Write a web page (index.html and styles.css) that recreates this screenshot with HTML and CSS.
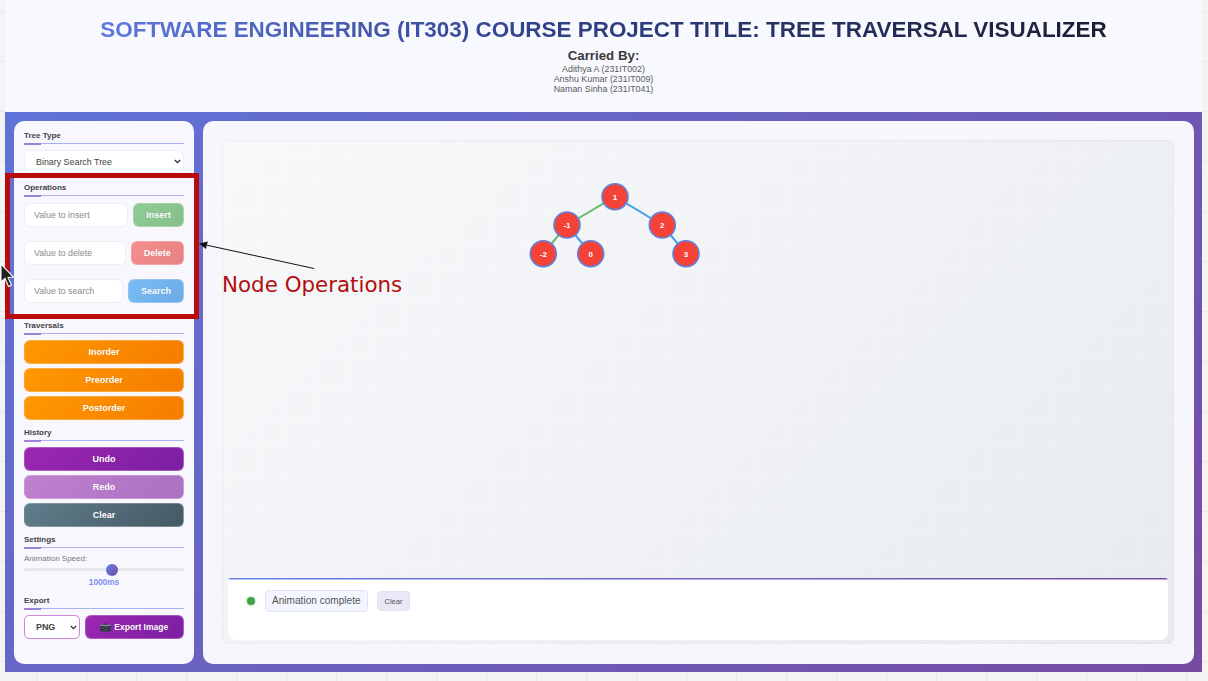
FILE: index.html
```html
<!DOCTYPE html>
<html lang="en">
<head>
<meta charset="utf-8">
<title>Tree Traversal Visualizer</title>
<link rel="stylesheet" href="styles.css">
</head>
<body>
<div class="app">
  <header class="header">
    <h1 class="title">SOFTWARE ENGINEERING (IT303) COURSE PROJECT TITLE: TREE TRAVERSAL VISUALIZER</h1>
    <h2 class="carried">Carried By:</h2>
    <p class="name">Adithya A (231IT002)</p>
    <p class="name">Anshu Kumar (231IT009)</p>
    <p class="name">Naman Sinha (231IT041)</p>
  </header>
  <div class="workspace">
    <aside class="sidebar">
      <section class="section section-type">
        <h3 class="section-title">Tree Type</h3>
        <select class="tree-select"><option>Binary Search Tree</option></select>
      </section>
      <section class="section section-ops">
        <h3 class="section-title">Operations</h3>
        <div class="op-row"><input class="op-input op-input-insert" placeholder="Value to insert"><button class="btn btn-insert">Insert</button></div>
        <div class="op-row"><input class="op-input op-input-delete" placeholder="Value to delete"><button class="btn btn-delete">Delete</button></div>
        <div class="op-row"><input class="op-input op-input-search" placeholder="Value to search"><button class="btn btn-search">Search</button></div>
      </section>
      <section class="section">
        <h3 class="section-title">Traversals</h3>
        <div class="stack">
          <button class="btn btn-orange">Inorder</button>
          <button class="btn btn-orange">Preorder</button>
          <button class="btn btn-orange">Postorder</button>
        </div>
      </section>
      <section class="section">
        <h3 class="section-title">History</h3>
        <div class="stack">
          <button class="btn btn-purple">Undo</button>
          <button class="btn btn-redo">Redo</button>
          <button class="btn btn-slate">Clear</button>
        </div>
      </section>
      <section class="section">
        <h3 class="section-title">Settings</h3>
        <label class="speed-label">Animation Speed:</label>
        <input class="speed" type="range" min="0" max="1800" value="1000">
        <div class="speed-value">1000ms</div>
      </section>
      <section class="section">
        <h3 class="section-title">Export</h3>
        <div class="export-row">
          <select class="export-select"><option>PNG</option></select>
          <button class="btn btn-export">
            <svg class="camera" viewBox="0 0 12 10" width="11" height="9"><path fill="#2f3a40" d="M1 2h2.5l.8-1.4h3.4L8.500 2H11a.7.7 0 0 1 .7.7v6a.7.7 0 0 1-.7.7H1a.7.7 0 0 1-.7-.7v-6A.7.7 0 0 1 1 2z"/><rect x=".3" y="2" width="11.400" height="1.200" fill="#8d9aa3"/><circle cx="6" cy="5.800" r="2.300" fill="#5f6f78"/><circle cx="6" cy="5.800" r="1.300" fill="#1c2428"/></svg>
            Export Image
          </button>
        </div>
      </section>
    </aside>
    <main class="main">
      <div class="canvas">
        <svg class="tree" viewBox="0 0 952 504" width="952" height="504">
          <g class="edges">
            <line class="edge-left" x1="393" y1="56.700" x2="345" y2="85"/>
            <line class="edge-right" x1="393" y1="56.700" x2="440.300" y2="85"/>
            <line class="edge-left" x1="345" y1="85" x2="321.300" y2="113.700"/>
            <line class="edge-right" x1="345" y1="85" x2="368.700" y2="113.700"/>
            <line class="edge-right" x1="440.300" y1="85" x2="464" y2="113.700"/>
          </g>
          <g class="node"><circle cx="393" cy="56.700" r="13"/><text x="393" y="59.500">1</text></g>
          <g class="node"><circle cx="345" cy="85" r="13"/><text x="345" y="87.800">-1</text></g>
          <g class="node"><circle cx="440.300" cy="85" r="13"/><text x="440.300" y="87.800">2</text></g>
          <g class="node"><circle cx="321.300" cy="113.700" r="13"/><text x="321.300" y="116.500">-2</text></g>
          <g class="node"><circle cx="368.700" cy="113.700" r="13"/><text x="368.700" y="116.500">0</text></g>
          <g class="node"><circle cx="464" cy="113.700" r="13"/><text x="464" y="116.500">3</text></g>
        </svg>
        <div class="log">
          <span class="log-dot"></span>
          <span class="log-message">Animation complete</span>
          <button class="log-clear">Clear</button>
        </div>
      </div>
    </main>
  </div>
</div>

<div class="callout-box"></div>
<svg class="callout-arrow" viewBox="0 0 130 40" width="130" height="40">
  <line x1="116" y1="30.500" x2="8" y2="7" stroke="#111" stroke-width="1"/>
  <path d="M1 5.500 L10 3.500 L8.500 7.500 L8 11 Z" fill="#111"/>
</svg>
<div class="callout-text">Node Operations</div>
<svg class="pointer" viewBox="0 0 16 26" width="16" height="26">
  <path d="M1 1 L1 19 L5 15.500 L8.500 23.500 L11.500 22 L8 14.500 L13.500 14 Z" fill="#222" stroke="#fff" stroke-width="1.100"/>
</svg>
</body>
</html>
```
FILE: styles.css
```css
* { box-sizing: border-box; }
html, body { margin: 0; height: 100%; }
body {
  position: relative;
  height: 681px;
  overflow: hidden;
  padding: 0 6px 9px 5px;
  font-family: "Liberation Sans", Arial, sans-serif;
  background-color: #f4f4f4;
  background-image:
    linear-gradient(#e8e8e8 1px, transparent 1px),
    linear-gradient(90deg, #e8e8e8 1px, transparent 1px);
  background-size: 50px 50px;
  background-position: 36px 11px;
}
.app { display: flex; flex-direction: column; height: 672px; }

/* Header */
.header {
  height: 112px;
  flex: none;
  padding-top: 17px;
  background: #f8f9ff;
  text-align: center;
}
.title {
  margin: 0 auto;
  width: fit-content;
  font-size: 22.45px;
  line-height: 26px;
  font-weight: 700;
  background: linear-gradient(90deg, #5f78dc 0%, #2f4088 45%, #1a1f33 100%);
  -webkit-background-clip: text;
  background-clip: text;
  color: transparent;
}
.carried {
  margin: 5px 0 1px;
  font-size: 13.3px;
  line-height: 15px;
  font-weight: 700;
  color: #3a3a3a;
}
.name {
  margin: 0;
  font-size: 8.9px;
  line-height: 10px;
  color: #5a5a5a;
}

/* Workspace */
.workspace {
  flex: 1;
  display: flex;
  gap: 9px;
  padding: 9px 8px 8px 9px;
  background: linear-gradient(135deg, #5f73d8 0%, #764ba2 100%);
  min-height: 0;
}
.sidebar {
  flex: none;
  width: 180px;
  padding: 10px 10px 9px;
  border-radius: 10px;
  background: #f7f7fd;
}
.section { margin-bottom: 8px; }
.section-type { margin-bottom: 10px; }
.section-ops { margin-bottom: 18px; }
.section-ops .section-title { margin-bottom: 7px; }
.section-ops .op-row:last-child { margin-bottom: 0; }
.section-title {
  position: relative;
  margin: 0 0 6px;
  height: 13px;
  font-size: 8px;
  line-height: 10px;
  font-weight: 700;
  color: #444;
  border-bottom: 1.500px solid #a8b0f2;
}
.section-title::after {
  content: "";
  position: absolute;
  left: 0;
  bottom: -1.500px;
  width: 17px;
  height: 1.500px;
  background: #9a84d8;
}
.tree-select,
.export-select {
  -webkit-appearance: none;
  appearance: none;
  background-color: #fff;
  background-repeat: no-repeat;
  background-image: url("data:image/svg+xml,%3Csvg xmlns='http://www.w3.org/2000/svg' width='7' height='5'%3E%3Cpath d='M.8 1l2.700 2.700L6.200 1' fill='none' stroke='%23333' stroke-width='1.300'/%3E%3C/svg%3E");
}
.tree-select {
  display: block;
  width: 100%;
  height: 23px;
  padding: 0 11px;
  font: 8.9px "Liberation Sans", Arial, sans-serif;
  color: #444;
  background-position: right 2.500px center;
  border: 1px solid #eef0fa;
  border-radius: 6px;
}
.op-row { display: flex; gap: 5px; margin-bottom: 14px; height: 24px; }
.op-input {
  height: 24px;
  padding: 0 9px;
  font: 8.8px "Liberation Sans", Arial, sans-serif;
  background: #fff;
  border: 1px solid #eceef8;
  border-radius: 6px;
  outline: none;
}
.op-input::placeholder { color: #8a8a8a; }
.op-input-insert { width: 104px; }
.op-input-delete { width: 101.500px; }
.op-input-search { width: 99px; }
.btn {
  display: block;
  height: 24px;
  padding: 0;
  border: 1px solid rgba(255, 255, 255, .25);
  border-radius: 6px;
  color: #fff;
  font: 700 9px "Liberation Sans", Arial, sans-serif;
  text-shadow: 0 0 1px rgba(0, 0, 0, .15);
}
.op-row .btn { flex: 1; min-width: 0; }
.btn-insert { background: linear-gradient(135deg, #8fcb94, #85c08a); }
.btn-delete { background: linear-gradient(135deg, #f58e8c, #e68282); }
.btn-search { background: linear-gradient(135deg, #79bcf4, #6cabe6); }
.stack { display: flex; flex-direction: column; gap: 4px; }
.stack .btn { width: 100%; }
.btn-orange { background: linear-gradient(135deg, #ff9800, #f57c00); }
.btn-purple { background: linear-gradient(135deg, #9c27b0, #7b1fa2); }
.btn-redo { background: linear-gradient(135deg, #c17fcf, #aa72c2); }
.btn-slate { background: linear-gradient(135deg, #607d8b, #455a64); }
.speed-label {
  display: block;
  height: 10px;
  font-size: 8px;
  line-height: 10px;
  color: #7a7a7a;
}
.speed {
  display: block;
  -webkit-appearance: none;
  appearance: none;
  width: 100%;
  height: 3px;
  margin: 4px 0 0;
  padding: 0;
  background: #e6e8ec;
  border-radius: 2px;
}
.speed::-webkit-slider-thumb {
  -webkit-appearance: none;
  appearance: none;
  width: 12px;
  height: 12px;
  border-radius: 50%;
  background: linear-gradient(135deg, #667eea, #764ba2);
  border: none;
}
.speed-value {
  margin-top: 5px;
  height: 12px;
  font-size: 8.3px;
  line-height: 12px;
  font-weight: 700;
  text-align: center;
  color: #7c8ff0;
}
.export-row { display: flex; gap: 4.500px; height: 24px; }
.export-select {
  width: 56px;
  height: 24px;
  padding: 0 11px;
  flex: none;
  font: 700 8.9px "Liberation Sans", Arial, sans-serif;
  color: #444;
  background-position: right 2px center;
  border: 1px solid #cc88d8;
  border-radius: 5px;
}
.btn-export {
  flex: 1;
  display: flex;
  align-items: center;
  justify-content: center;
  gap: 3px;
  font-size: 8.5px;
  background: linear-gradient(135deg, #9c27b0, #7b1fa2);
}
.camera { flex: none; }

/* Main */
.main {
  flex: 1;
  display: flex;
  min-width: 0;
  padding: 19px 20px 20px 19px;
  border-radius: 10px;
  background: #f7f6fd;
}
.canvas {
  position: relative;
  flex: 1;
  display: flex;
  flex-direction: column;
  justify-content: flex-end;
  padding: 0 6px 4px;
  border-radius: 6px;
  background-color: #f2f3f7;
  background-image:
    linear-gradient(rgba(0, 0, 0, .013) 1px, transparent 1px),
    linear-gradient(90deg, rgba(0, 0, 0, .013) 1px, transparent 1px),
    linear-gradient(135deg, #f8f9fb 0%, #e9ecef 100%);
  background-size: 11px 11px, 11px 11px, 100% 100%;
  box-shadow: inset 0 0 4px rgba(0, 0, 0, .05);
}
.tree {
  position: absolute;
  left: 0;
  top: 0;
}
.edges line { stroke-width: 2; }
.edge-left { stroke: #66bb6a; }
.edge-right { stroke: #42a0e6; }
.node circle { fill: #f44336; stroke: #5f82e0; stroke-width: 1.600; }
.node text {
  fill: #fff;
  font: 700 8px "Liberation Sans", Arial, sans-serif;
  text-anchor: middle;
}
.log {
  display: flex;
  align-items: flex-start;
  height: 62px;
  padding: 12px 0 0 19px;
  background: linear-gradient(90deg, #667eea, #764ba2) top / 100% 1.500px no-repeat, #fff;
  border-radius: 3px 3px 8px 8px;
}
.log-dot {
  width: 8px;
  height: 8px;
  margin: 7px 10px 0 0;
  flex: none;
  border-radius: 50%;
  background: #43a047;
  box-shadow: 0 0 3px rgba(76, 175, 80, .6);
}
.log-message {
  height: 22px;
  width: 103px;
  padding: 0 6px;
  margin-right: 9px;
  font-size: 10.1px;
  line-height: 20px;
  white-space: nowrap;
  color: #555;
  background: #f4f6ff;
  border: 1px solid #dfe4fa;
  border-radius: 4px;
}
.log-clear {
  height: 20px;
  width: 33px;
  margin-top: 1px;
  padding: 0;
  font: 7.6px "Liberation Sans", Arial, sans-serif;
  color: #555;
  background: #e8e8f7;
  border: 1px solid #e0e0f2;
  border-radius: 4px;
}

/* Screenshot annotations lying over the page */
.callout-box {
  position: absolute;
  left: 5px;
  top: 173px;
  width: 194px;
  height: 146px;
  border: 5px solid #b80c0c;
}
.callout-arrow {
  position: absolute;
  left: 198px;
  top: 238px;
}
.callout-text {
  position: absolute;
  left: 222px;
  top: 270px;
  font: 21.4px/30px "DejaVu Sans", sans-serif;
  color: #b30d0d;
}
.pointer {
  position: absolute;
  left: 0;
  top: 263px;
}
```
